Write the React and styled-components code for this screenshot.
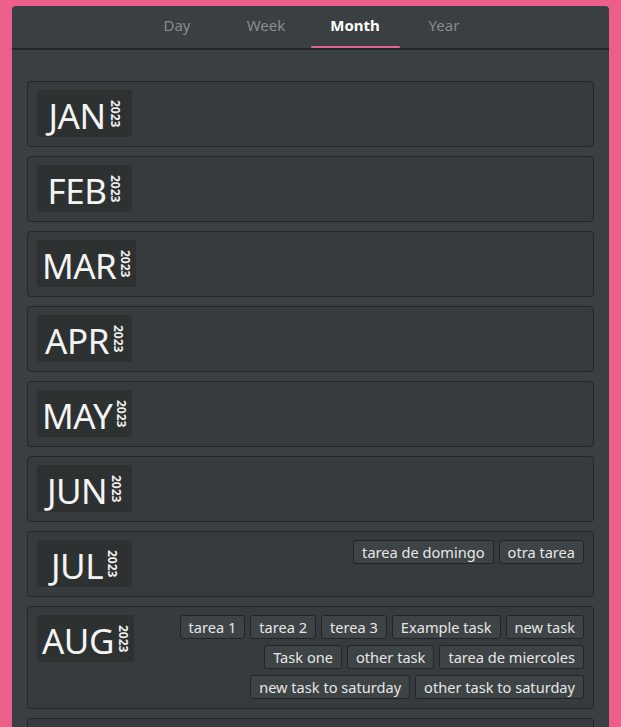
import React, { useState } from 'react';
import styled, { createGlobalStyle } from 'styled-components';

const GlobalStyle = createGlobalStyle`
  html, body {
    margin: 0;
    padding: 0;
    height: 100%;
    overflow: hidden;
    background: #ec5f8a;
    font-family: 'Noto Sans', 'Open Sans', sans-serif;
  }
`;

const Page = styled.div`
  padding: 6px 12px 0 12px;
  height: 100vh;
  box-sizing: border-box;
`;

const Panel = styled.div`
  background: #3a3f41;
  border-radius: 4px 4px 0 0;
  height: 100%;
  overflow: hidden;
`;

const Tabs = styled.div`
  display: flex;
  justify-content: center;
  height: 42px;
  border-bottom: 2px solid #232628;
`;

const Tab = styled.button`
  width: 89px;
  border: none;
  background: transparent;
  font-family: inherit;
  font-size: 15px;
  font-weight: ${p => p.$active ? 700 : 400};
  color: ${p => p.$active ? '#ffffff' : '#878d90'};
  padding: 0 0 4px;
  position: relative;
  cursor: pointer;
  &::after {
    content: '';
    display: ${p => p.$active ? 'block' : 'none'};
    position: absolute;
    left: 0;
    right: 0;
    bottom: 0;
    height: 2px;
    border-radius: 2px;
    background: #e0668f;
  }
`;

const List = styled.div`
  display: flex;
  flex-direction: column;
  gap: 9px;
  padding: 31px 15px 0;
`;

const Card = styled.div`
  display: flex;
  align-items: flex-start;
  gap: 12px;
  padding: 8px 9px 9px;
  background: #373b3e;
  border: 1px solid #232628;
  border-radius: 4px;
`;

const Label = styled.div`
  flex: none;
  display: flex;
  align-items: center;
  justify-content: center;
  gap: 3px;
  min-width: 95px;
  height: 47px;
  padding: 3px 5px 0;
  box-sizing: border-box;
  background: #2d3131;
  border-radius: 2px;
`;

const MonthName = styled.span`
  font-size: 35px;
  color: #f4f4f4;
  letter-spacing: -0.5px;
  line-height: 1;
`;

const Year = styled.span`
  writing-mode: vertical-rl;
  font-size: 12px;
  font-weight: 700;
  color: #f0f0f0;
  line-height: 1;
  margin-top: -3px;
`;

const Chips = styled.div`
  flex: 1;
  display: flex;
  flex-wrap: wrap;
  justify-content: flex-end;
  align-content: flex-start;
  gap: 6px 5px;
`;

const Chip = styled.span`
  height: 24px;
  display: inline-flex;
  align-items: center;
  padding: 0 8px;
  box-sizing: border-box;
  background: #3e4345;
  border: 1px solid #222527;
  border-radius: 3px;
  font-size: 14.6px;
  color: #e6e7e7;
  white-space: nowrap;
`;

const months = [
  { name: 'JAN', tasks: [] },
  { name: 'FEB', tasks: [] },
  { name: 'MAR', tasks: [] },
  { name: 'APR', tasks: [] },
  { name: 'MAY', tasks: [] },
  { name: 'JUN', tasks: [] },
  { name: 'JUL', tasks: ['tarea de domingo', 'otra tarea'] },
  {
    name: 'AUG',
    tasks: [
      'tarea 1', 'tarea 2', 'terea 3', 'Example task', 'new task',
      'Task one', 'other task', 'tarea de miercoles',
      'new task to saturday', 'other task to saturday',
    ],
  },
  { name: 'SEP', tasks: [] },
];

export default function App() {
  const [view, setView] = useState('Month');

  return (
    <>
      <GlobalStyle />
      <Page>
        <Panel>
          <Tabs>
            {['Day', 'Week', 'Month', 'Year'].map(t => (
              <Tab key={t} $active={view === t} onClick={() => setView(t)}>{t}</Tab>
            ))}
          </Tabs>
          <List>
            {months.map(m => (
              <Card key={m.name}>
                <Label>
                  <MonthName>{m.name}</MonthName>
                  <Year>2023</Year>
                </Label>
                <Chips>
                  {m.tasks.map(t => <Chip key={t}>{t}</Chip>)}
                </Chips>
              </Card>
            ))}
          </List>
        </Panel>
      </Page>
    </>
  );
}
